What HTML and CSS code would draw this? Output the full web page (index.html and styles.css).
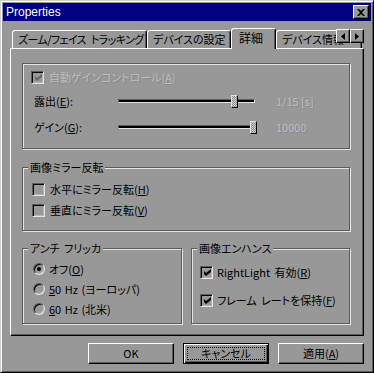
FILE: index.html
```html
<!DOCTYPE html>
<html lang="ja">
<head>
<meta charset="utf-8">
<title>Properties</title>
<link rel="stylesheet" href="styles.css">
</head>
<body>
<div class="window">
  <div class="titlebar">
    <span class="title">Properties</span>
    <span class="close"><svg width="8" height="7" viewBox="0 0 8 7"><path d="M0 0h2l2 2 2-2h2L5 3.5 8 7H6L4 5 2 7H0l3-3.5z" fill="#000"/></svg></span>
  </div>
  <div class="body">
    <div class="tabs">
      <div class="tab t1">ズーム/フェイス トラッキング</div>
      <div class="tab t2">デバイスの設定</div>
      <div class="tab t3 active">詳細</div>
      <div class="tab t4">デバイス情報</div>
      <div class="tab-scroll">
        <span class="sbtn"><svg width="4" height="7" viewBox="0 0 4 7"><path d="M4 0v7L0 3.5z" fill="#000"/></svg></span>
        <span class="sbtn"><svg width="4" height="7" viewBox="0 0 4 7"><path d="M0 0v7l4-3.5z" fill="#000"/></svg></span>
      </div>
    </div>
    <div class="panel">
      <fieldset class="group g1">
        <div class="g1-inner">
          <div class="row chk-row">
            <span class="chk disabled"><svg width="7" height="7" viewBox="0 0 7 7"><path d="M0 2l2 2 5-4v3L2 7 0 5z" fill="#6a6a6a"/></svg></span>
            <span class="lbl dis">自動ゲインコントロール(<u>A</u>)</span>
          </div>
          <div class="row slider-row r2">
            <span class="slabel">露出(<u>E</u>):</span>
            <span class="track"><span class="thumb" style="left:112px"></span></span>
            <span class="sval dis">1/15 [s]</span>
          </div>
          <div class="row slider-row r3">
            <span class="slabel">ゲイン(<u>G</u>):</span>
            <span class="track"><span class="thumb" style="left:131px"></span></span>
            <span class="sval dis">10000</span>
          </div>
        </div>
      </fieldset>

      <fieldset class="group g2">
        <legend>画像ミラー反転</legend>
        <div class="g2-inner">
          <div class="row chk-row">
            <span class="chk"></span>
            <span class="lbl">水平にミラー反転(<u>H</u>)</span>
          </div>
          <div class="row chk-row">
            <span class="chk"></span>
            <span class="lbl">垂直にミラー反転(<u>V</u>)</span>
          </div>
        </div>
      </fieldset>

      <div class="bottom-groups">
        <fieldset class="group g3">
          <legend>アンチ フリッカ</legend>
          <div class="g3-inner">
            <div class="row radio-row">
              <span class="radio checked"></span>
              <span class="rlbl">オフ(<u>O</u>)</span>
            </div>
            <div class="row radio-row">
              <span class="radio"></span>
              <span class="rlbl"><u>5</u>0 Hz (ヨーロッパ)</span>
            </div>
            <div class="row radio-row">
              <span class="radio"></span>
              <span class="rlbl"><u>6</u>0 Hz (北米)</span>
            </div>
          </div>
        </fieldset>
        <fieldset class="group g4">
          <legend>画像エンハンス</legend>
          <div class="g4-inner">
            <div class="row chk-row">
              <span class="chk"><svg width="7" height="7" viewBox="0 0 7 7"><path d="M0 2l2 2 5-4v3L2 7 0 5z" fill="#000"/></svg></span>
              <span class="lbl">RightLight 有効(<u>R</u>)</span>
            </div>
            <div class="row chk-row second">
              <span class="chk"><svg width="7" height="7" viewBox="0 0 7 7"><path d="M0 2l2 2 5-4v3L2 7 0 5z" fill="#000"/></svg></span>
              <span class="lbl">フレーム レートを保持(<u>F</u>)</span>
            </div>
          </div>
        </fieldset>
      </div>
    </div>
    <div class="buttons">
      <button class="btn">OK</button>
      <button class="btn default">キャンセル</button>
      <button class="btn">適用(<u>A</u>)</button>
    </div>
  </div>
</div>
</body>
</html>
```
FILE: styles.css
```css
* { box-sizing: border-box; }
html, body { margin: 0; padding: 0; }
body {
  background: #989898;
  font-family: "Noto Sans CJK JP", sans-serif;
  font-size: 11px;
  color: #000;
  font-feature-settings: "palt";
}
u { text-underline-offset: 1px; }

.window {
  width: 374px;
  height: 373px;
  background: #989898;
  border: 1px solid;
  border-color: #d0d0d0 #000 #000 #d0d0d0;
  box-shadow: inset 1px 1px 0 #fff, inset -1px -1px 0 #5c5c5c;
  padding: 2px;
  display: flex;
  flex-direction: column;
}

.titlebar {
  height: 18px;
  background: #000080;
  display: flex;
  align-items: center;
  padding: 0 2px 0 3px;
}
.title {
  color: #fff;
  font-family: "Liberation Sans", sans-serif;
  font-size: 12px;
  line-height: 14px;
}
.close {
  margin-left: auto;
  width: 16px;
  height: 14px;
  background: #989898;
  border: 1px solid;
  border-color: #fff #000 #000 #fff;
  box-shadow: inset -1px -1px 0 #5c5c5c;
  display: flex;
  align-items: center;
  justify-content: center;
}

.body {
  flex: 1;
  padding: 7px 7px 6px 7px;
  display: flex;
  flex-direction: column;
}

.tabs {
  position: relative;
  height: 20px;
  display: flex;
  align-items: flex-end;
  padding-left: 2px;
}
.tab {
  height: 18px;
  border-left: 1px solid #fff;
  border-top: 1px solid #fff;
  border-right: 1px solid #000;
  box-shadow: inset -1px 0 0 #5c5c5c;
  border-radius: 3px 3px 0 0;
  padding: 0 5px;
  line-height: 16px;
  white-space: nowrap;
  overflow: hidden;
  flex-shrink: 0;
}
.t1 { width: 135px; letter-spacing: -0.6px; word-spacing: 3px; }
.t2 { width: 84px; }
.t3 { width: 45px; }
.t4 { width: 86px; padding-left: 5px; }
.tab.active {
  height: 21px;
  margin-bottom: -1px;
  position: relative;
  z-index: 1;
  background: #989898;
  line-height: 18px;
  padding-left: 7px;
  font-size: 12px;
}
.tab-scroll {
  position: absolute;
  right: 0;
  top: 1px;
  display: flex;
  z-index: 2;
}
.sbtn {
  width: 14px;
  height: 14px;
  background: #989898;
  border: 1px solid;
  border-color: #fff #000 #000 #fff;
  box-shadow: inset -1px -1px 0 #5c5c5c;
  display: flex;
  align-items: center;
  justify-content: center;
}

.panel {
  height: 288px;
  border: 1px solid;
  border-color: #fff #000 #000 #fff;
  box-shadow: inset -1px -1px 0 #5c5c5c;
  padding: 14px 0 0 11px;
  display: flex;
  flex-direction: column;
}

.group {
  margin: 0;
  padding: 0;
  min-width: 0;
  border: 1px solid #5c5c5c;
  box-shadow: 1px 1px 0 #e4e4e4, inset 1px 1px 0 #e4e4e4;
}
.group legend {
  margin-left: 5px;
  padding: 0 2px;
  height: 13px;
  line-height: 13px;
  background: #989898;
  word-spacing: 2px;
}

.row { display: flex; align-items: center; height: 20px; }

.g1 { width: 328px; }
.g1-inner { padding: 3px 0 11px 0; }
.g1 .chk-row { padding-left: 8px; }
.g1 .r2 { margin-top: 4px; }
.g1 .r3 { margin-top: 6px; }

.slider-row { padding-left: 11px; }
.slabel { width: 84px; }
.track {
  position: relative;
  width: 137px;
  height: 4px;
  background: #000;
  border-top: 1px solid #5c5c5c;
  border-left: 1px solid #5c5c5c;
  border-bottom: 1px solid #e4e4e4;
  border-right: 1px solid #e4e4e4;
}
.thumb {
  position: absolute;
  top: -5px;
  width: 7px;
  height: 13px;
  border: 1px solid;
  border-color: #e4e4e4 #000 #000 #e4e4e4;
  background: repeating-conic-gradient(#cfcfcf 0 25%, #8c8c8c 0 50%) 0 0 / 2px 2px;
}
.sval { margin-left: 21px; }

.dis { color: #bdbdbd; text-shadow: 1px 1px 0 #8a8a8a; }

.chk {
  width: 13px;
  height: 13px;
  flex-shrink: 0;
  border: 1px solid;
  border-color: #5c5c5c #e4e4e4 #e4e4e4 #5c5c5c;
  box-shadow: inset 1px 1px 0 #000, inset -1px -1px 0 #b4b4b4;
  display: flex;
  align-items: center;
  justify-content: center;
}
.chk svg { margin: 1px 0 0 1px; }
.lbl { margin-left: 5px; word-spacing: 2px; }

.g2 { width: 328px; margin-top: 12px; }
.g2-inner { padding: 5px 0 10px 9px; }
.g2 .row + .row { margin-top: 1px; }

.bottom-groups {
  display: flex;
  gap: 9px;
  margin-top: 11px;
}
.g3 { width: 160px; }
.g4 { width: 159px; }
.g3-inner { padding: 4px 0 4px 10px; }
.radio {
  width: 12px;
  height: 12px;
  flex-shrink: 0;
  border-radius: 50%;
  border: 1px solid;
  border-color: #5c5c5c #e4e4e4 #e4e4e4 #5c5c5c;
  box-shadow: inset 1px 1px 0 #000, inset -1px -1px 0 #b4b4b4;
  display: flex;
  align-items: center;
  justify-content: center;
}
.radio.checked::after {
  content: "";
  width: 4px;
  height: 4px;
  border-radius: 50%;
  background: #000;
}
.rlbl { margin-left: 4px; word-spacing: 1px; }

.g4-inner { padding: 7px 0 0 8px; }
.g4 .second { margin-top: 8px; }
.g4 .lbl { margin-left: 4px; }

.buttons {
  display: flex;
  justify-content: flex-end;
  gap: 9px;
  margin-top: 7px;
}
.btn {
  width: 86px;
  height: 21px;
  padding: 0;
  margin: 0;
  font-family: "Noto Sans CJK JP", sans-serif;
  font-feature-settings: "palt";
  font-size: 11px;
  color: #000;
  background: #989898;
  border: 1px solid;
  border-color: #fff #000 #000 #fff;
  box-shadow: inset -1px -1px 0 #5c5c5c;
  line-height: 17px;
}
.btn.default {
  border: 1px solid #000;
  box-shadow: inset 1px 1px 0 #fff, inset -1px -1px 0 #000, inset -2px -2px 0 #5c5c5c;
  outline: 1px dotted #000;
  outline-offset: -5px;
}
```
